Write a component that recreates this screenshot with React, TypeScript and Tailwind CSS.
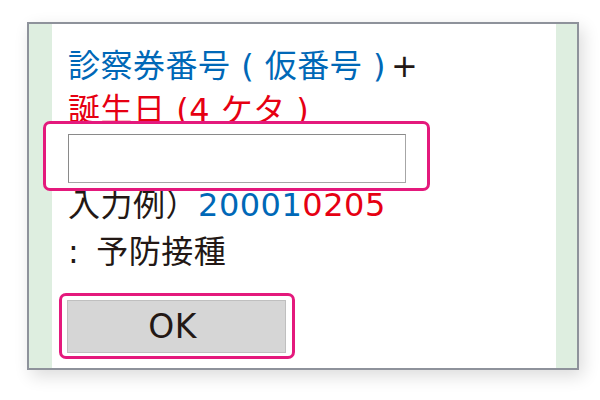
const jp = '"DejaVu Sans", "Noto Sans CJK JP", sans-serif';

function PinkBox({ className, children }: { className: string; children: React.ReactNode }) {
  return (
    <div className={`rounded-[7px] border-[3px] border-[#e4197c] bg-white ${className}`}>
      {children}
    </div>
  );
}

export default function App() {
  return (
    <div className="h-[400px] w-[600px] bg-white pl-[27px] pt-[22px]" style={{ fontFamily: jp }}>
      <div className="flex h-[348px] w-[552px] border-2 border-[#8e929b] bg-[#deeee0] shadow-[4px_6px_16px_rgba(0,0,0,0.14)]">
        <div className="ml-[23px] h-full w-[504px] bg-white pl-[16px] pt-[19px] text-[32px] leading-[47px] tracking-[0.5px] text-[#231815]">
          <div className="whitespace-nowrap">
            <span className="text-[#0068b7]">診察券番号 ( 仮番号 )</span>
            <span className="ml-[5px]">+</span>
          </div>
          <div className="mt-[-3px] whitespace-nowrap text-[#e60012]">誕生日 (4 ケタ )</div>

          <PinkBox className="relative ml-[-25px] mt-[-13px] h-[70px] w-[387px] pl-[22px] pt-[10px]">
            <input
              type="text"
              className="block h-[49px] w-[338px] border border-[#a6a6a6] border-l-[#8a8a8a] border-t-[#8a8a8a] bg-white outline-none"
            />
          </PinkBox>

          <div className="mt-[-9px] whitespace-nowrap">
            入力例）<span className="text-[#0068b7]">20001</span>
            <span className="text-[#e60012]">0205</span>
          </div>
          <div className="whitespace-nowrap">
            <span>:</span>
            <span className="ml-[17px]">予防接種</span>
          </div>

          <PinkBox className="ml-[-9px] mt-[17px] h-[66px] w-[236px] pb-[3px] pl-[5px] pr-[6px] pt-[4px]">
            <button
              type="button"
              className="flex h-full w-full items-center justify-center border border-[#bfbfbf] bg-[#d6d6d6] pr-[8px] text-[33px] leading-none text-[#231815]"
            >
              OK
            </button>
          </PinkBox>
        </div>
      </div>
    </div>
  );
}
